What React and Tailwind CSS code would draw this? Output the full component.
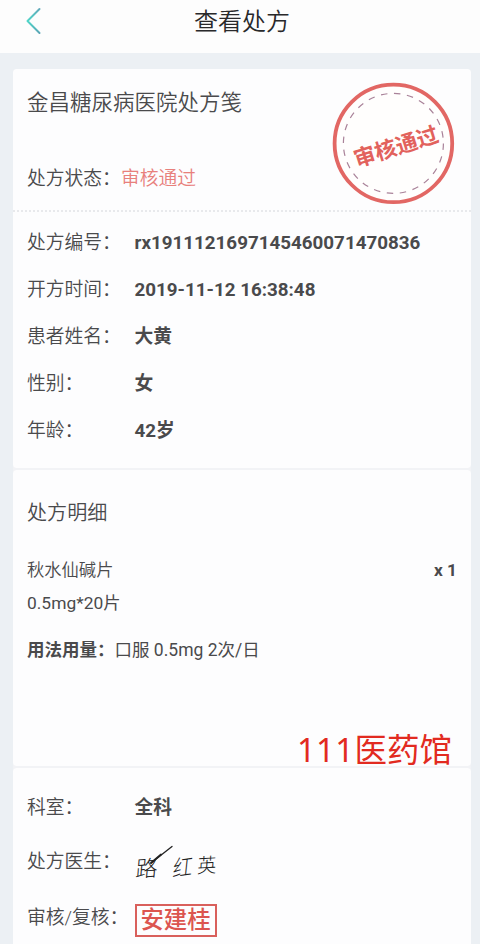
const details = [
  { label: "处方编号：", value: "rx1911121697145460071470836" },
  { label: "开方时间：", value: "2019-11-12 16:38:48" },
  { label: "患者姓名：", value: "大黄" },
  { label: "性别：", value: "女" },
  { label: "年龄：", value: "42岁" },
];

function Row({ label, children, className }) {
  return (
    <div className={`flex items-center text-[18.8px] leading-none ${className}`}>
      <span className="w-[107.5px] shrink-0 whitespace-nowrap">{label}</span>
      {children}
    </div>
  );
}

// Round "approved" stamp in the corner of the first card
function ApprovedStamp() {
  return (
    <svg viewBox="0 0 124 124" className="h-[124px] w-[124px]">
      <circle cx="62.4" cy="62.4" r="58.8" fill="#fffefd" stroke="#e26764" strokeWidth="3.8" />
      <circle cx="62.4" cy="62.4" r="50" fill="none" stroke="#a98299" strokeWidth="1.2" strokeDasharray="6.5 6.6" />
      <text
        x="62"
        y="70"
        textAnchor="middle"
        fontSize="21.8"
        fill="#e2625c"
        transform="translate(3 3.5) rotate(-17.5 62 62)"
        className="font-bold"
      >
        审核通过
      </text>
    </svg>
  );
}

// Doctor's signature with its long upward stroke
function Signature() {
  return (
    <svg viewBox="0 0 90 48" className="-ml-[4px] h-[48px] w-[90px] overflow-visible" fill="#222">
      <text fontSize="22" className="font-light" transform="translate(4 38) rotate(-3) skewX(-8)">路</text>
      <text fontSize="20" className="font-light" transform="translate(41 38) rotate(-8) skewX(-14) scale(1 1.1)">红</text>
      <text fontSize="19" className="font-light" transform="translate(66 34) rotate(-3) skewX(-6) scale(1 1.05)">英</text>
      <path d="M20 24 L41 7.5" fill="none" stroke="#222" strokeWidth="1.3" strokeLinecap="round" />
      <path d="M20 24 L30 15.5" fill="none" stroke="#222" strokeWidth="1.9" strokeLinecap="round" />
    </svg>
  );
}

export default function App() {
  return (
    <div className="flex h-[944px] w-[480px] flex-col overflow-hidden bg-[#ecf0f4] font-[Roboto,'Noto_Sans_CJK_SC',sans-serif] font-[350] text-[#4a4a4c]">
      <header className="grid h-[53px] shrink-0 grid-cols-[60px_1fr_60px] items-center bg-[#fdfdfd] pb-[10px]">
        <svg viewBox="0 0 16 28" className="-mt-[2px] ml-[25px] h-7 w-4" fill="none">
          <defs>
            <linearGradient id="back" x1="0" y1="0" x2="0" y2="1">
              <stop offset="0" stopColor="#62aaba" />
              <stop offset="0.5" stopColor="#4fd6c8" />
              <stop offset="1" stopColor="#5aa5b5" />
            </linearGradient>
          </defs>
          <path d="M14.5 2 L2.5 14 L14.5 26" stroke="url(#back)" strokeWidth="2" strokeLinecap="round" strokeLinejoin="round" />
        </svg>
        <h1 className="pt-px pl-[4px] text-center text-[24px] leading-none text-[#29292b]">查看处方</h1>
      </header>

      <main className="grow pt-4 pr-[9px] pl-[13px]">
        <div className="flex flex-col gap-[2px] rounded-t-[4px] bg-[#f2f3f6]">
          <section className="h-[399px] shrink-0 rounded-[4px] bg-[#fdfdfe]">
            <div className="flex h-[143px] justify-between border-b-2 border-dotted border-[#e8e9ec] pr-[16px] pl-[14px]">
              <div className="flex flex-col">
                <h2 className="mt-[23px] text-[21.5px] leading-[22px]">金昌糖尿病医院处方笺</h2>
                <p className="mt-[55px] flex text-[18.8px] leading-[20px]">
                  <span>处方状态：</span>
                  <span className="text-[#e8807c]">审核通过</span>
                </p>
              </div>
              <div className="mt-[12px]">
                <ApprovedStamp />
              </div>
            </div>
            <div className="pt-[8px] pl-[14px]">
              {details.map((d) => (
                <Row key={d.label} label={d.label} className="h-[47px]">
                  <span className="font-bold text-[#4a4a4c]">{d.value}</span>
                </Row>
              ))}
            </div>
          </section>

          <section className="relative h-[296px] shrink-0 rounded-[4px] bg-[#fdfdfe] pr-[14px] pl-[14px]">
            <h2 className="pt-[32px] text-[20.1px] leading-[22px]">处方明细</h2>
            <div className="mt-[36px] flex justify-between text-[17.3px] leading-[20px]">
              <span>秋水仙碱片</span>
              <span className="font-bold">x 1</span>
            </div>
            <p className="mt-[13px] text-[17.4px] leading-[20px] font-normal">0.5mg*20片</p>
            <p className="mt-[27px] text-[17.5px] leading-[20px] font-normal">
              <span className="font-bold">用法用量：</span>口服 0.5mg 2次/日
            </p>
            <div className="absolute right-[19px] -bottom-px font-['Noto_Sans','Noto_Sans_CJK_SC',sans-serif] text-[32.5px] leading-[34px] font-normal whitespace-nowrap text-[#e22a20]">
              <span className="tracking-[0.6px]">111</span>医药馆
            </div>
          </section>

          <section className="h-[178px] shrink-0 rounded-t-[4px] bg-[#fdfdfe] pt-[13px] pl-[14px]">
            <Row label="科室：" className="h-[54px]">
              <span className="font-bold text-[#4a4a4c]">全科</span>
            </Row>
            <Row label="处方医生：" className="h-[55px]">
              <Signature />
            </Row>
            <Row label="审核/复核：" className="h-[57px]">
              <span className="mt-[3px] flex h-[33px] w-[82px] items-center justify-center border-2 border-[#d9605c] pt-px text-[23.4px] leading-none font-medium text-[#dc5550]">
                安建桂
              </span>
            </Row>
          </section>
        </div>
      </main>
    </div>
  );
}
